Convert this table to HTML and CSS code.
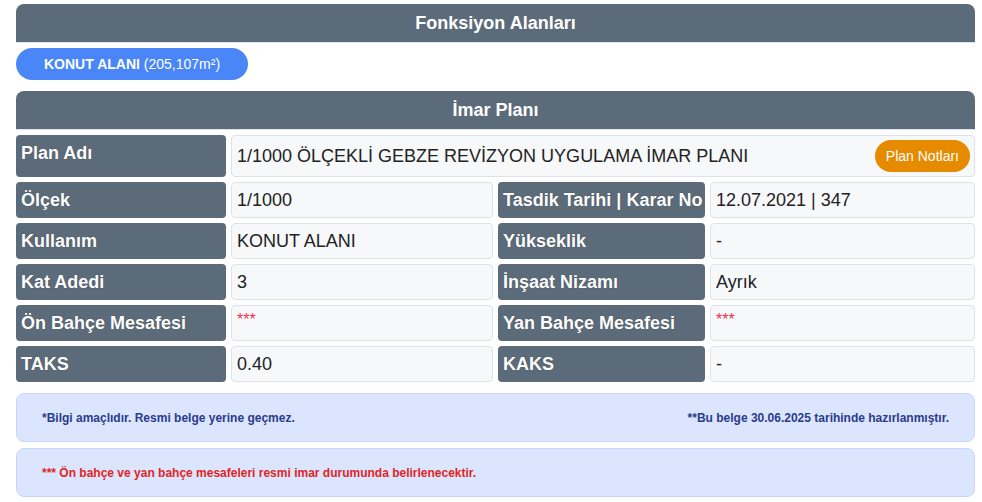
FILE: index.html
```html
<!DOCTYPE html>
<html>
<head>
    <title>İmar Durumu</title>
    <link rel="stylesheet" href="styles.css">
</head>
<body>
    <div class="page">
        <!-- Fonksiyon alanları -->
        <div class="panel-title">Fonksiyon Alanları</div>
        <div class="tags">
            <span class="tag"><b>KONUT ALANI</b>&nbsp;(205,107m²)</span>
        </div>

        <!-- İmar planı -->
        <div class="panel-title">İmar Planı</div>
        <div class="grid">
            <div class="label">Plan Adı</div>
            <div class="value wide plan-row">
                <span>1/1000 ÖLÇEKLİ GEBZE REVİZYON UYGULAMA İMAR PLANI</span>
                <button class="notes-btn">Plan Notları</button>
            </div>

            <div class="label">Ölçek</div>
            <div class="value">1/1000</div>
            <div class="label">Tasdik Tarihi | Karar No</div>
            <div class="value">12.07.2021 | 347</div>

            <div class="label">Kullanım</div>
            <div class="value">KONUT ALANI</div>
            <div class="label">Yükseklik</div>
            <div class="value">-</div>

            <div class="label">Kat Adedi</div>
            <div class="value">3</div>
            <div class="label">İnşaat Nizamı</div>
            <div class="value">Ayrık</div>

            <div class="label">Ön Bahçe Mesafesi</div>
            <div class="value"><span class="stars">***</span></div>
            <div class="label">Yan Bahçe Mesafesi</div>
            <div class="value"><span class="stars">***</span></div>

            <div class="label">TAKS</div>
            <div class="value">0.40</div>
            <div class="label">KAKS</div>
            <div class="value">-</div>
        </div>

        <div class="note info">
            <span>*Bilgi amaçlıdır. Resmi belge yerine geçmez.</span>
            <span>**Bu belge 30.06.2025 tarihinde hazırlanmıştır.</span>
        </div>
        <div class="note warn">
            <span>*** Ön bahçe ve yan bahçe mesafeleri resmi imar durumunda belirlenecektir.</span>
        </div>
    </div>
</body>
</html>
```

FILE: styles.css
```css
body {
    margin: 0;
    font-family: "Liberation Sans", Arial, sans-serif;
    background-color: white;
    color: #222;
}
.page {
    padding: 4px 7px 0 16px;
}
.panel-title {
    background-color: #5c6b7a;
    color: white;
    font-weight: bold;
    font-size: 18px;
    text-align: center;
    height: 38px;
    line-height: 38px;
    border-radius: 8px 8px 0 0;
    border-bottom: 1px solid #dde3ea;
}
.tags {
    display: flex;
    padding: 5px 0 11px;
}
.tag {
    background-color: #4a86f8;
    color: white;
    font-size: 14px;
    height: 32px;
    line-height: 32px;
    padding: 0 28px;
    border-radius: 16px;
}
.grid {
    display: grid;
    grid-template-columns: 210px 262px 207px 1fr;
    gap: 5px;
    margin-top: 5px;
}
.label {
    background-color: #5c6b7a;
    color: white;
    font-weight: bold;
    font-size: 18px;
    line-height: 22px;
    padding: 7px 4px 7px 5px;
    border-radius: 4px;
    white-space: nowrap;
    text-shadow: 0 0 1px rgba(0,0,0,0.4);
}
.value {
    background-color: #f7f8fa;
    border: 1px solid #dfe2e6;
    border-radius: 4px;
    font-size: 18px;
    line-height: 22px;
    padding: 6px 5px;
}
.wide {
    grid-column: 2 / 5;
}
.plan-row {
    display: flex;
    align-items: center;
    justify-content: space-between;
    padding: 4px 4px 4px 5px;
}
.notes-btn {
    background-color: #e68a00;
    color: white;
    border: none;
    border-radius: 16px;
    font-family: inherit;
    font-size: 14px;
    height: 32px;
    padding: 0 11px;
}
.stars {
    color: #e5394f;
    font-size: 16px;
    line-height: 16px;
    vertical-align: top;
}
.note {
    display: flex;
    justify-content: space-between;
    align-items: center;
    height: 47px;
    padding: 0 25px;
    border: 1px solid #c7d7fb;
    border-radius: 8px;
    background-color: #dbe5fe;
    font-size: 12px;
    font-weight: bold;
    margin-top: 6px;
}
.info {
    margin-top: 11px;
    color: #2a3c8c;
}
.warn {
    color: #e02424;
}
```
